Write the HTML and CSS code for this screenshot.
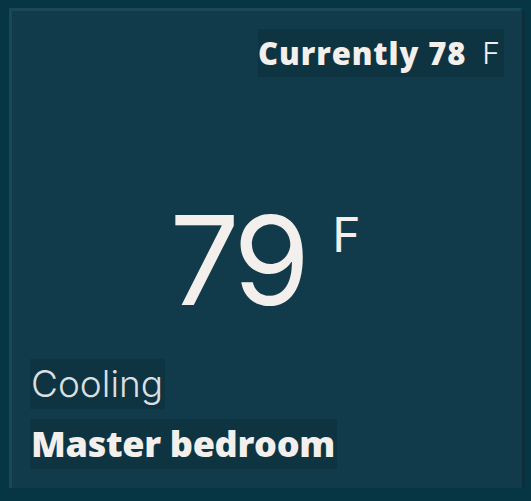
FILE: index.html
```html
<!DOCTYPE html>
<html>
<head>
<meta charset="utf-8">
<link rel="stylesheet" href="styles.css">
</head>
<body>
<div class="card">
  <div class="top">
    <div class="current"><span class="cur-label">Currently 78</span><span class="cur-unit">F</span></div>
  </div>
  <div class="main">
    <span class="temp">79</span><span class="unit">F</span>
  </div>
  <div class="bottom">
    <div class="state">Cooling</div>
    <div class="room">Master bedroom</div>
  </div>
</div>
</body>
</html>
```
FILE: styles.css
```css
html, body {
  margin: 0;
  padding: 0;
  background: #063544;
}
body {
  padding: 8px 0 0 9px;
  font-family: "Inter", "Open Sans", sans-serif;
  color: #f3efed;
}
.card {
  box-sizing: border-box;
  width: 513px;
  height: 480px;
  background: #113b4a;
  border-top: 3px solid #1b4858;
  border-left: 3px solid #1b4858;
  border-right: 3px solid #113b4a;
  border-bottom: 0;
  box-shadow: 3px 3px 0 #0b2e3a;
  display: flex;
  flex-direction: column;
  padding: 18px 15px 19px 18px;
}
.top {
  display: flex;
  justify-content: flex-end;
}
.current {
  background: #0f3441;
  height: 48px;
  display: flex;
  align-items: center;
  padding: 0 4px 0 0;
}
.cur-label {
  font-family: "Open Sans", sans-serif;
  font-size: 31px;
  font-weight: 800;
  letter-spacing: 0.9px;
}
.cur-unit {
  font-size: 30px;
  font-weight: 300;
  margin-left: 16px;
}
.main {
  flex: 1;
  display: flex;
  justify-content: center;
  align-items: flex-start;
  padding-top: 121px;
  padding-right: 4px;
}
.temp {
  font-size: 124px;
  font-weight: 400;
  line-height: 1;
  letter-spacing: -5px;
}
.unit {
  font-size: 48px;
  font-weight: 400;
  line-height: 1;
  margin-left: 27px;
  margin-top: 13px;
}
.bottom {
  display: flex;
  flex-direction: column;
  align-items: flex-start;
  gap: 10px;
}
.state {
  background: #0f3441;
  height: 50px;
  line-height: 50px;
  font-size: 37px;
  font-weight: 300;
  color: #dcdfe0;
  padding: 0 2px 0 1px;
}
.room {
  font-family: "Open Sans", sans-serif;
  background: #0f3441;
  height: 50px;
  line-height: 50px;
  font-size: 36px;
  font-weight: 800;
  letter-spacing: -0.3px;
  padding: 0 2px 0 1px;
}
```
